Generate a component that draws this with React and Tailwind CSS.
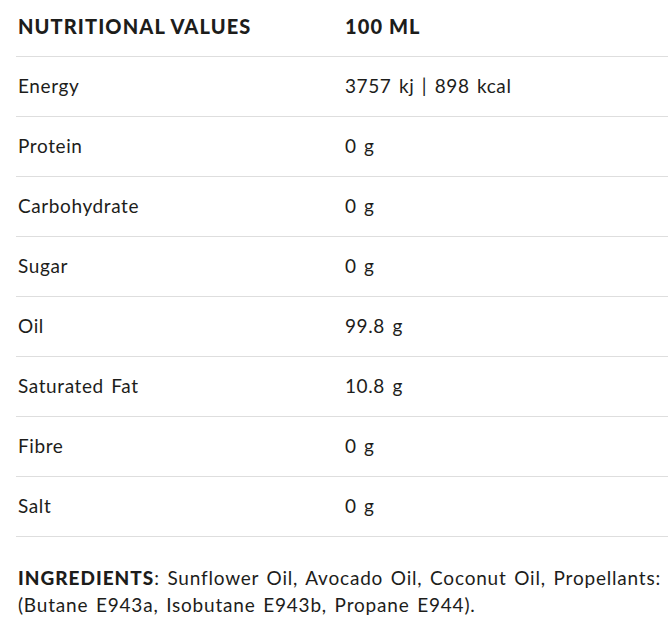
const rows = [
    ['Energy', '3757 kj | 898 kcal'],
    ['Protein', '0 g'],
    ['Carbohydrate', '0 g'],
    ['Sugar', '0 g'],
    ['Oil', '99.8 g'],
    ['Saturated Fat', '10.8 g'],
    ['Fibre', '0 g'],
    ['Salt', '0 g'],
];

const App = () => {
    return (
        <div className="min-h-screen bg-white text-[#1d1d1b] font-['Lato',sans-serif]">
            <div className="ml-[16px] w-[652px]">
                {/* Header */}
                <div className="flex h-[57px] items-center border-b border-[#dedede] pb-[4px] text-[20px] font-black tracking-[1.1px]">
                    <div className="w-[329px] pl-[2px]">NUTRITIONAL VALUES</div>
                    <div>100 ML</div>
                </div>

                {/* Rows */}
                {rows.map(([label, value]) => (
                    <div key={label} className="flex h-[60px] items-center border-b border-[#dedede] text-[19px] tracking-[0.6px] [word-spacing:2px]">
                        <div className="w-[329px] pl-[2px]">{label}</div>
                        <div>{value}</div>
                    </div>
                ))}
            </div>

            {/* Ingredients */}
            <p className="mt-[27px] pl-[18px] text-[19px] leading-[27px] tracking-[0.8px] [word-spacing:2px]">
                <span className="font-black tracking-[1px]">INGREDIENTS</span>: Sunflower Oil, Avocado Oil, Coconut Oil, Propellants: (Butane E943a, Isobutane E943b, Propane E944).
            </p>
        </div>
    );
};

export default App;
